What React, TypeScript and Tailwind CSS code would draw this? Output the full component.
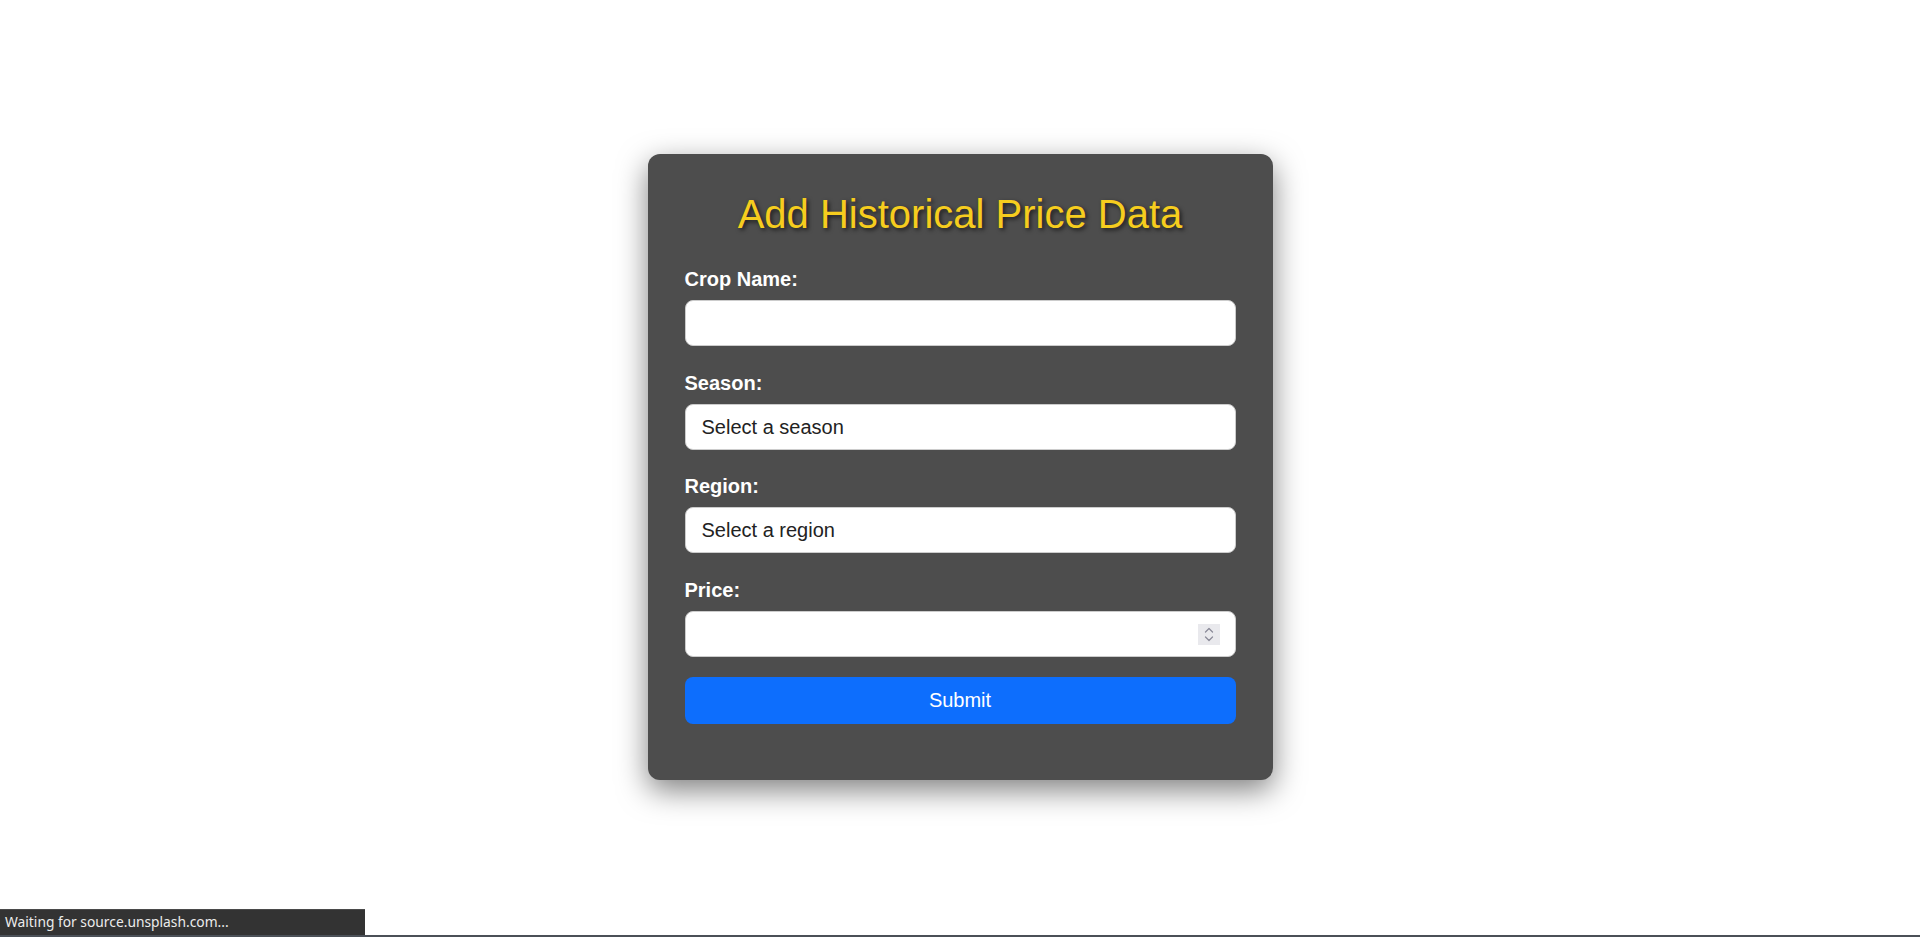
import { useState } from 'react';

const fields = [
  { id: 'crop', label: 'Crop Name:', kind: 'text' },
  { id: 'season', label: 'Season:', kind: 'select', placeholder: 'Select a season', options: ['Kharif', 'Rabi', 'Zaid'] },
  { id: 'region', label: 'Region:', kind: 'select', placeholder: 'Select a region', options: ['North', 'South', 'East', 'West'] },
  { id: 'price', label: 'Price:', kind: 'number' },
];

function Spinner() {
  return (
    <div className="absolute right-[16px] top-[13px] w-[22px] h-[21px] bg-[#e9e9ed] flex items-center justify-center pointer-events-none">
      <svg width="12" height="17" viewBox="0 0 12 17" fill="none" stroke="#8b8b99" strokeWidth="1.3" strokeLinecap="round" strokeLinejoin="round">
        <path d="M2.5 6 L6 2.5 L9.5 6" />
        <path d="M2.5 11 L6 14.5 L9.5 11" />
      </svg>
    </div>
  );
}

export default function App() {
  const [values, setValues] = useState<Record<string, string>>({});

  const update = (id: string, v: string) => setValues((prev) => ({ ...prev, [id]: v }));

  return (
    <div className="relative w-full h-screen bg-white flex flex-col font-['Liberation_Sans',Arial,sans-serif]">
      <div className="flex-1 flex items-center justify-center">
        <div className="w-[625px] h-[626px] -mt-[1px] bg-[#4d4d4d] rounded-xl shadow-[0_10px_30px_rgba(0,0,0,0.5)] px-[37px] pt-[37px]">
          <h2 className="text-[40px] leading-[46px] text-center text-[#f6cd1e] [text-shadow:2px_2px_4px_rgba(0,0,0,0.65)] mb-[31px]">
            Add Historical Price Data
          </h2>
          <form onSubmit={(e) => e.preventDefault()} className="flex flex-col">
            {fields.map((f, i) => (
              <div key={f.id} className={i === fields.length - 1 ? 'mb-[20.5px]' : 'mb-[25.5px]'}>
                <label htmlFor={f.id} className="block text-[20px] leading-[23px] font-bold text-white mb-[9px]">
                  {f.label}
                </label>
                {f.kind === 'select' ? (
                  <select
                    id={f.id}
                    value={values[f.id] ?? ''}
                    onChange={(e) => update(f.id, e.target.value)}
                    className="appearance-none block w-full h-[46px] rounded-lg border border-[#cccccc] bg-white px-4 text-[20px] text-[#222] outline-none"
                  >
                    <option value="">{f.placeholder}</option>
                    {f.options?.map((o) => (
                      <option key={o} value={o}>{o}</option>
                    ))}
                  </select>
                ) : (
                  <div className="relative">
                    <input
                      id={f.id}
                      type="text"
                      inputMode={f.kind === 'number' ? 'decimal' : 'text'}
                      value={values[f.id] ?? ''}
                      onChange={(e) => update(f.id, e.target.value)}
                      className="block w-full h-[46px] rounded-lg border border-[#cccccc] bg-white px-4 text-[20px] text-[#222] outline-none"
                    />
                    {f.kind === 'number' && <Spinner />}
                  </div>
                )}
              </div>
            ))}
            <button type="submit" className="w-full h-[46.5px] rounded-lg bg-[#0d6efd] text-white text-[20px]">
              Submit
            </button>
          </form>
        </div>
      </div>
      <div className="h-[2px] w-full bg-[#4b5057]" />

      {/* browser status overlay */}
      <div className="absolute left-0 bottom-[2px] w-[365px] h-[26px] bg-[#333333] border-t border-[#4a4a4a] flex items-center pl-[5px] text-[13.8px] text-[#ececec] font-['Noto_Sans',sans-serif]">
        Waiting for source.unsplash.com...
      </div>
    </div>
  );
}
